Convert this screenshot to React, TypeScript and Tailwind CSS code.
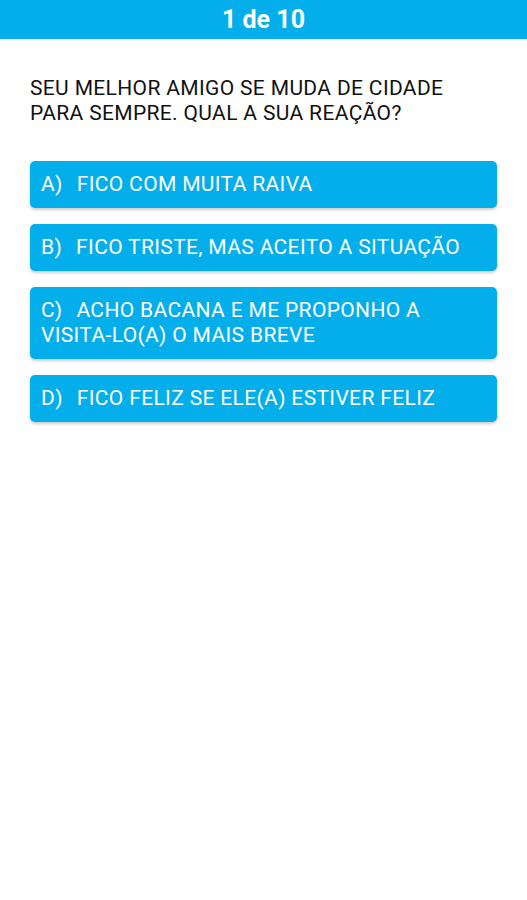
import React from "react";

const options = [
  { l: "A)", t: "FICO COM MUITA RAIVA" },
  { l: "B)", t: "FICO TRISTE, MAS ACEITO A SITUAÇÃO" },
  { l: "C)", t: "ACHO BACANA E ME PROPONHO A VISITA-LO(A) O MAIS BREVE" },
  { l: "D)", t: "FICO FELIZ SE ELE(A) ESTIVER FELIZ" },
];

export default function App() {
  return (
    <div className="w-[527px] h-[900px] bg-white" style={{ fontFamily: "Roboto, 'Noto Sans', sans-serif" }}>
      <div className="h-[39px] bg-[#03aeea] flex items-center justify-center">
        <span className="text-white font-bold text-[25px] leading-none">1 de 10</span>
      </div>
      <div className="px-[30px] pt-[37px]">
        <p className="text-[21px] leading-[25px] tracking-[0.35px] text-[#111] pr-[40px]">
          SEU MELHOR AMIGO SE MUDA DE CIDADE PARA SEMPRE. QUAL A SUA REAÇÃO?
        </p>
        <div className="mt-[35px] flex flex-col gap-[16px]">
          {options.map((o) => (
            <div
              key={o.l}
              className="bg-[#03aeea] rounded-[5px] shadow-[0_2px_3px_rgba(0,0,0,0.2)] pl-[11px] pr-[8px] py-[11px] text-white text-[21px] leading-[25px] tracking-[0.35px] min-h-[47px]"
            >
              <span className="mr-[14px]">{o.l}</span>{o.t}
            </div>
          ))}
        </div>
      </div>
    </div>
  );
}
